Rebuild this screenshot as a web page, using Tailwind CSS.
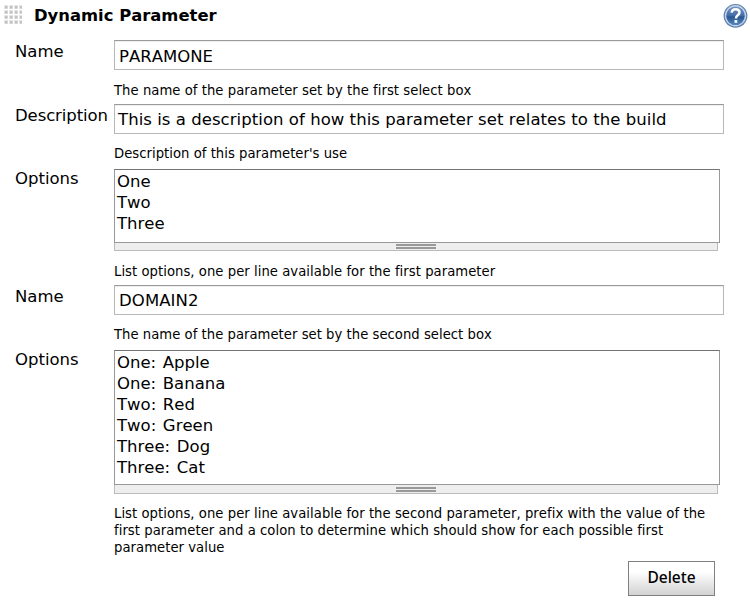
<!DOCTYPE html>
<html lang="en">
<head>
<meta charset="utf-8">
<title>Dynamic Parameter</title>
<script src="https://cdn.jsdelivr.net/npm/@tailwindcss/browser@4"></script>
</head>
<body class="bg-white text-black w-[750px] h-[600px] overflow-hidden font-['DejaVu_Sans',Verdana,sans-serif] text-[16.5px] whitespace-nowrap [font-kerning:none] [font-variant-ligatures:none]">
<header class="h-10 flex items-start pl-1">
  <svg class="mt-[5px] w-[18px] h-5 shrink-0" viewBox="0 0 18 20">
    <defs><pattern id="grip" width="5" height="5" patternUnits="userSpaceOnUse"><rect width="4" height="4" fill="#e6e6e6"/><rect x="1" y="1" width="2.5" height="2.5" fill="#c2c2c2"/></pattern></defs>
    <rect width="18" height="20" fill="url(#grip)"/>
  </svg>
  <h1 class="ml-3 mt-[6px] leading-5 font-bold text-[16.4px]">Dynamic Parameter</h1>
  <svg class="ml-auto mr-0.5 mt-[3px] w-[25px] h-[26px] shrink-0" viewBox="0 0 25 26">
    <defs><linearGradient id="blue" x1="0" y1="0" x2="0" y2="1"><stop offset="0" stop-color="#7796c4"/><stop offset=".5" stop-color="#416da9"/><stop offset=".55" stop-color="#285791"/><stop offset="1" stop-color="#5a8bc0"/></linearGradient></defs>
    <circle cx="12.5" cy="12.8" r="11.9" fill="#5b80b2"/>
    <circle cx="12.5" cy="12.8" r="10" fill="url(#blue)" stroke="#c3d2e6" stroke-width="1.4"/>
    <path d="M8.6 9.6C9 7.3 10.5 6.3 12.6 6.3c2.3 0 3.9 1.3 3.9 3.3 0 2.8-3.6 2.7-3.6 5.8" fill="none" stroke="#fff" stroke-width="2.5"/>
    <rect x="11.5" y="17.1" width="2.8" height="2.7" fill="#fff"/>
  </svg>
</header>
<main>
  <section class="flex h-16 pl-[15px]">
    <div class="w-[99px] leading-[24px]">Name</div>
    <div class="w-[610px]">
      <div class="h-[30px] border border-[#b8b8b8] border-t-[#999] pl-1 leading-[31px] shadow-[inset_0_1px_1px_#eee]">PARAMONE</div>
      <p class="mt-3 text-[13.2px] leading-[17px] tracking-[0.045px]">The name of the parameter set by the first select box</p>
    </div>
  </section>
  <section class="flex h-[65px] pl-[15px]">
    <div class="w-[99px] leading-[24px] tracking-[-0.1px]">Description</div>
    <div class="w-[610px]">
      <div class="h-[30px] border border-[#b8b8b8] border-t-[#999] pl-[3px] leading-[29px] shadow-[inset_0_1px_1px_#eee] tracking-[0.05px]">This is a description of how this parameter set relates to the build</div>
      <p class="mt-[11px] text-[13.2px] leading-[17px] tracking-[0.03px]">Description of this parameter's use</p>
    </div>
  </section>
  <section class="flex h-[116px] pl-[15px]">
    <div class="w-[99px] leading-[19px]">Options</div>
    <div class="w-[610px]">
      <div class="w-[606px] h-[74px] border border-[#999] border-t-[#737373] pl-0.5 pt-px leading-[21px]">One<br>Two<br>Three</div>
      <div class="w-[604px] h-2 bg-[#eee] border border-t-0 border-[#bbb] flex justify-center pt-px"><div class="w-10 h-[5px] border-y-2 border-[#999]"></div></div>
      <p class="mt-3 text-[13.2px] leading-[17px] tracking-[0.045px]">List options, one per line available for the first parameter</p>
    </div>
  </section>
  <section class="flex h-[65px] pl-[15px]">
    <div class="w-[99px] leading-[24px]">Name</div>
    <div class="w-[610px]">
      <div class="h-[30px] border border-[#b8b8b8] border-t-[#999] pl-1 leading-[29px] shadow-[inset_0_1px_1px_#eee] tracking-[0.1px]">DOMAIN2</div>
      <p class="mt-[11px] text-[13.2px] leading-[17px] tracking-[0.03px]">The name of the parameter set by the second select box</p>
    </div>
  </section>
  <section class="flex h-[211px] pl-[15px]">
    <div class="w-[99px] leading-[19px]">Options</div>
    <div class="w-[610px]">
      <div class="w-[606px] h-[135px] border border-[#999] border-t-[#737373] pl-0.5 pt-px leading-[21px] [word-spacing:1.4px]">One: Apple<br>One: Banana<br>Two: Red<br>Two: Green<br>Three: Dog<br>Three: Cat</div>
      <div class="w-[604px] h-[9px] bg-[#eee] border border-t-0 border-[#bbb] flex justify-center pt-0.5"><div class="w-10 h-[5px] border-y-2 border-[#999]"></div></div>
      <p class="mt-[11px] text-[13.2px] leading-[17px] tracking-[0.045px]">List options, one per line available for the second parameter, prefix with the value of the<br>first parameter and a colon to determine which should show for each possible first<br>parameter value</p>
    </div>
  </section>
  <div class="flex justify-end pr-[35px]">
    <button class="w-[87px] h-[35px] pb-0.5 border border-[#808080] bg-linear-to-b from-white from-30% to-[#d2d2d2] text-[15.5px] font-medium font-[family-name:'Noto_Sans',sans-serif]">Delete</button>
  </div>
</main>
</body>
</html>
